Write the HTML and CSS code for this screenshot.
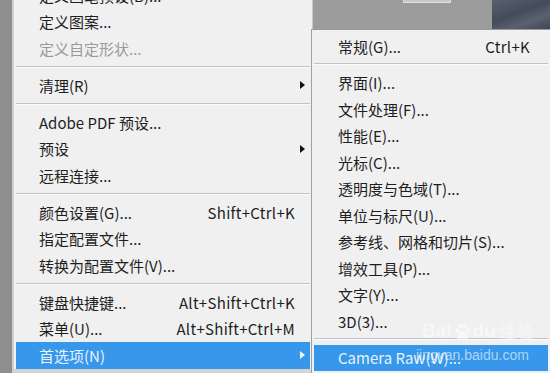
FILE: index.html
```html
<!DOCTYPE html>
<html lang="zh-CN">
<head>
    <meta charset="UTF-8">
    <meta name="viewport" content="width=device-width, initial-scale=1.0">
    <title>首选项</title>
    <link rel="stylesheet" href="styles.css">
</head>
<body>
    <div class="screen">
        <div class="edge"></div>

        <!-- Edit menu -->
        <div class="menu main">
            <div class="item">定义画笔预设(B)...</div>
            <div class="item">定义图案...</div>
            <div class="item disabled">定义自定形状...</div>
            <div class="sep"></div>
            <div class="item">清理(R)<span class="arrow"></span></div>
            <div class="sep"></div>
            <div class="item">Adobe PDF 预设...</div>
            <div class="item">预设<span class="arrow"></span></div>
            <div class="item">远程连接...</div>
            <div class="sep"></div>
            <div class="item">颜色设置(G)...<span class="key">Shift+Ctrl+K</span></div>
            <div class="item">指定配置文件...</div>
            <div class="item">转换为配置文件(V)...</div>
            <div class="sep"></div>
            <div class="item">键盘快捷键...<span class="key">Alt+Shift+Ctrl+K</span></div>
            <div class="item">菜单(U)...<span class="key">Alt+Shift+Ctrl+M</span></div>
            <div class="item active">首选项(N)<span class="arrow"></span></div>
        </div>

        <div class="side">
            <div class="canvas">
                <div class="canvas-gray"><span class="doc-tab"></span></div>
                <div class="canvas-photo"></div>
            </div>

            <!-- Preferences submenu -->
            <div class="menu sub">
                <div class="item">常规(G)...<span class="key">Ctrl+K</span></div>
                <div class="sep"></div>
                <div class="item">界面(I)...</div>
                <div class="item">文件处理(F)...</div>
                <div class="item">性能(E)...</div>
                <div class="item">光标(C)...</div>
                <div class="item">透明度与色域(T)...</div>
                <div class="item">单位与标尺(U)...</div>
                <div class="item">参考线、网格和切片(S)...</div>
                <div class="item">增效工具(P)...</div>
                <div class="item">文字(Y)...</div>
                <div class="item">3D(3)...</div>
                <div class="sep"></div>
                <div class="item active">Camera Raw(W)...</div>
            </div>
        </div>

        <!-- watermark -->
        <div class="watermark">
            <div class="wm-logo">Bai<svg class="paw" viewBox="0 0 24 24" width="19" height="19">
                <ellipse cx="5" cy="11" rx="2.6" ry="3.2"/>
                <ellipse cx="9.5" cy="5" rx="2.6" ry="3.2"/>
                <ellipse cx="15" cy="5" rx="2.6" ry="3.2"/>
                <ellipse cx="19.5" cy="11" rx="2.6" ry="3.2"/>
                <path d="M12 11c-3 0-7 5-7 8.5 0 2.5 2.5 3 4 2.5 1.2-.4 2-.7 3-.7s1.8.3 3 .7c1.5.5 4 0 4-2.5C19 16 15 11 12 11z"/>
            </svg>du<span class="wm-cn">经验</span></div>
            <div class="wm-url">jingyan.baidu.com</div>
        </div>
    </div>
</body>
</html>
```

FILE: styles.css
```css
body {
    margin: 0;
    padding: 0;
    background-color: #8c8c8c;
    font-family: "Noto Sans CJK SC", "Noto Sans", sans-serif;
    font-size: 15px;
    color: #1e1e1e;
}

.screen {
    position: relative;
    display: flex;
    width: 550px;
    height: 373px;
    overflow: hidden;
}

.edge {
    width: 12px;
    background-color: #8e8e8e;
    border-right: 2px solid #cfcfcf;
}

.menu {
    background-color: #f0f0f0;
}

.main {
    width: 298px;
    margin-top: -18px;
    border-right: 1px solid #c9c9c9;
    border-bottom: 4px solid #d4d4d4;
}

.item {
    display: flex;
    align-items: center;
    height: 26.5px;
    margin: 0 2px;
    padding: 0 15px 0 23px;
    white-space: nowrap;
}

.item.disabled {
    color: #9a9a9a;
}

.item.active {
    background-color: #3797ea;
    color: #e8f2fd;
}

.key {
    margin-left: auto;
    letter-spacing: 0.3px;
}

.arrow {
    margin-left: auto;
    margin-right: -10px;
    width: 0;
    height: 0;
    border-left: 5px solid #111;
    border-top: 4px solid transparent;
    border-bottom: 4px solid transparent;
}

.active .arrow {
    border-left-color: #f2f7fd;
}

.sep {
    height: 0;
    margin: 4px 2px 4.5px;
    border-top: 1px solid #c2c2c2;
    border-bottom: 1px solid #fbfbfb;
}

.side {
    flex: 1;
    display: flex;
    flex-direction: column;
}

.canvas {
    height: 29px;
    display: flex;
}

.canvas-gray {
    width: 179px;
    background-color: #9c9c9c;
}

.doc-tab {
    display: block;
    width: 46px;
    height: 2px;
    margin-left: 90px;
    background-color: #c9c9c9;
    border: 1px solid #e0e0e0;
    border-top: none;
}

.canvas-photo {
    flex: 1;
    background: linear-gradient(160deg, #59606e 0%, #444b59 45%, #5a6272 70%, #3f4552 100%);
}

.sub {
    flex: 1;
    margin-left: -2px;
    padding-top: 3px;
    border-top: 1px solid #9a9a9a;
    border-left: 1px solid #a0a0a0;
}

.sub .item {
    padding: 0 18px 0 24px;
}

.sub .sep {
    margin-top: 3.5px;
}

.watermark {
    position: absolute;
    left: 422px;
    top: 320px;
    white-space: nowrap;
    color: rgba(255, 255, 255, 0.55);
    font-family: "Liberation Sans", sans-serif;
}

.wm-logo {
    display: flex;
    align-items: center;
    font-size: 19px;
    font-weight: bold;
    line-height: 22px;
}

.paw {
    fill: rgba(255, 255, 255, 0.55);
    margin: 0 1px;
}

.wm-cn {
    margin-left: 3px;
    font-family: "Noto Sans CJK SC", sans-serif;
    font-size: 17px;
    font-weight: normal;
}

.wm-url {
    margin-top: 5px;
    margin-left: -6px;
    font-size: 14px;
    color: rgba(255, 255, 255, 0.6);
}
```
